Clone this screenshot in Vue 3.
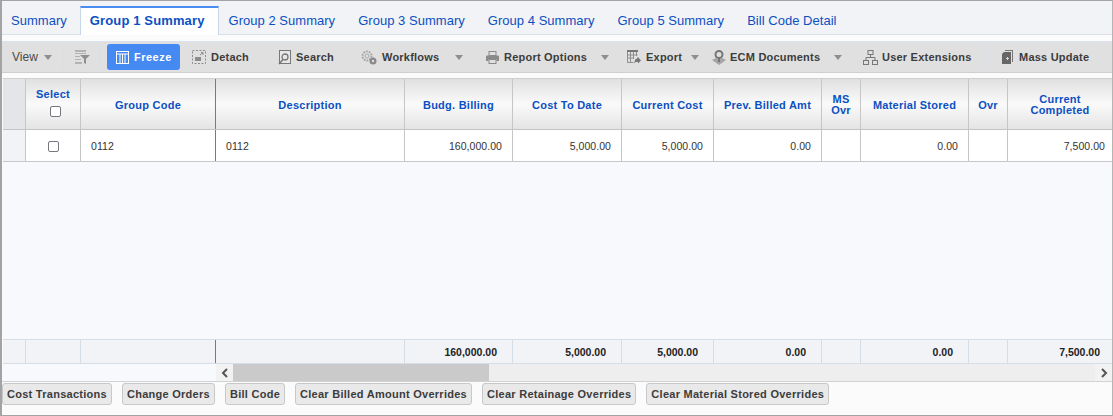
<script setup>
const tabs = ["Summary", "Group 1 Summary", "Group 2 Summary", "Group 3 Summary", "Group 4 Summary", "Group 5 Summary", "Bill Code Detail"];

const columns = [
  { key: "rowHead" },
  { key: "select", label: "Select" },
  { key: "code", label: "Group Code" },
  { key: "desc", label: "Description" },
  { key: "budg", label: "Budg. Billing", value: "160,000.00" },
  { key: "cost", label: "Cost To Date", value: "5,000.00" },
  { key: "current", label: "Current Cost", value: "5,000.00" },
  { key: "prev", label: "Prev. Billed Amt", value: "0.00" },
  { key: "msOvr", label: "MS Ovr", narrow: true },
  { key: "material", label: "Material Stored", value: "0.00" },
  { key: "ovr", label: "Ovr" },
  { key: "completed", label: "Current Completed", narrow: true, value: "7,500.00" },
];

const actions = ["Cost Transactions", "Change Orders", "Bill Code", "Clear Billed Amount Overrides", "Clear Retainage Overrides", "Clear Material Stored Overrides"];
</script>

<template>
  <div class="page">
    <nav class="tabs">
      <a v-for="(tab, i) in tabs" :key="tab" class="tab" :class="{ 'tab--active': i === 1 }">{{ tab }}</a>
    </nav>

    <div class="toolbar">
      <span class="tool tool--view">View<i class="caret"></i></span>
      <span class="sep"></span>
      <span class="tool tool--filter">
        <svg width="15" height="14" viewBox="0 0 15 14" fill="none">
          <path d="M0 0h11v2H0zM0 3h11v1H0zM0 6h5v1H0zM0 9h6v1H0zM0 12h7v2H0z" fill="#b2b2b2" />
          <path d="M5 5h10l-4 4v5l-2-1V9z" fill="#8f8f8f" />
        </svg>
      </span>
      <span class="sep"></span>
      <span class="tool tool--freeze">
        <svg width="13" height="13" viewBox="0 0 13 13" fill="none" stroke="#fff">
          <rect x=".5" y=".5" width="12" height="12" />
          <path d="M.5 3h12M4 3v9.500M6.500 3v9.500M9 3v9.500" />
        </svg>
        Freeze
      </span>
      <span class="tool tool--detach">
        <svg width="14" height="14" viewBox="0 0 14 14" fill="none">
          <rect x=".5" y=".5" width="13" height="13" stroke="#8c8c8c" stroke-dasharray="2 1.500" />
          <rect x="3" y="7" width="6" height="4" fill="#8c8c8c" />
          <path d="M8 5l3-2.500M9 2.500h2V5" stroke="#8c8c8c" />
        </svg>
        Detach
      </span>
      <span class="sep"></span>
      <span class="tool tool--search">
        <svg width="13" height="15" viewBox="0 0 13 15" fill="none" stroke="#777">
          <rect x="1.500" y=".5" width="11" height="13" fill="#e8e8e8" />
          <circle cx="7" cy="7" r="3" stroke-width="1.300" />
          <path d="M5 9.500L1 14" stroke-width="1.600" />
        </svg>
        Search
      </span>
      <span class="tool tool--workflows">
        <svg width="16" height="15" viewBox="0 0 16 15" fill="none">
          <circle cx="6" cy="6" r="4.500" stroke="#a8a8a8" stroke-width="2" stroke-dasharray="1.800 1" />
          <circle cx="6" cy="6" r="2" stroke="#a8a8a8" />
          <circle cx="12" cy="11" r="3.500" fill="#8a8a8a" />
          <circle cx="12" cy="11" r="1.200" fill="#e0e0e0" />
        </svg>
        Workflows<i class="caret"></i>
      </span>
      <span class="tool tool--report">
        <svg width="13" height="13" viewBox="0 0 13 13" fill="none">
          <rect x="3" y=".5" width="7" height="4" stroke="#8a8a8a" />
          <path d="M1 4.500h11a1 1 0 0 1 1 1V10h-2.500V8h-8v2H0V5.500a1 1 0 0 1 1-1z" fill="#8a8a8a" />
          <rect x="3" y="8.500" width="7" height="4" stroke="#8a8a8a" />
        </svg>
        Report Options<i class="caret"></i>
      </span>
      <span class="tool tool--export">
        <svg width="14" height="14" viewBox="0 0 14 14" fill="none">
          <path d="M0 0h11v2H0z" fill="#777" />
          <path d="M.5 2v10.500h6M3.500 2v10M6.500 2v7M9.500 2v4M.5 5h10M.5 8h6" stroke="#8f8f8f" />
          <path d="M7 13l1.500-4h1L11 7l3 3.500-3 3V12H9z" fill="#777" />
        </svg>
        Export<i class="caret"></i>
      </span>
      <span class="tool tool--ecm">
        <svg width="14" height="15" viewBox="0 0 14 15" fill="none">
          <path d="M0 10l4-2 3 2 3-2 4 2-7 5z" fill="#a5a5a5" />
          <circle cx="7" cy="4.500" r="3.500" stroke="#777" stroke-width="2" />
          <path d="M6 8h2v4H6z" fill="#777" />
        </svg>
        ECM Documents<i class="caret"></i>
      </span>
      <span class="tool tool--ext">
        <svg width="15" height="15" viewBox="0 0 15 15" fill="none" stroke="#777">
          <rect x="5" y=".5" width="5" height="4" />
          <rect x=".5" y="10.500" width="5" height="4" />
          <rect x="9.500" y="10.500" width="5" height="4" />
          <path d="M7.500 4.500v3M3 10.500v-3h9v3" />
        </svg>
        User Extensions
      </span>
      <span class="sep"></span>
      <span class="tool tool--mass">
        <svg width="11" height="14" viewBox="0 0 11 14">
          <path d="M3 0h8v12h-1V1H3z" fill="#777" />
          <path d="M2 2h7v12H0V4z" fill="#666" />
          <path d="M4 8h1V7h1v1h1v1H6v1H5V9H4z" fill="#d8d8d8" />
        </svg>
        Mass Update
      </span>
    </div>

    <div class="grid-wrap">
      <div class="grid grid--head">
        <div v-for="col in columns" :key="col.key" class="hcell" :class="`c-${col.key}`">
          <span v-if="col.label" :class="{ 'hcell__narrow': col.narrow }">{{ col.label }}</span>
          <input v-if="col.key === 'select'" class="check check--head" type="checkbox" />
        </div>
      </div>

      <div class="grid grid--row">
        <div v-for="col in columns" :key="col.key" class="cell" :class="`c-${col.key}`">
          <input v-if="col.key === 'select'" class="check" type="checkbox" />
          <template v-else-if="col.key === 'code' || col.key === 'desc'">0112</template>
          <template v-else>{{ col.value }}</template>
        </div>
      </div>

      <div class="grid-empty"></div>

      <div class="grid grid--foot">
        <div v-for="col in columns" :key="col.key" class="fcell" :class="`c-${col.key}`">{{ col.value }}</div>
      </div>
    </div>

    <div class="scrollrow">
      <div class="scrollrow__blank"></div>
      <div class="scrollbar">
        <span class="scrollbar__arrow">
          <svg width="8" height="10" viewBox="0 0 8 10" fill="none" stroke="#555" stroke-width="2"><path d="M6 1L2 5l4 4" /></svg>
        </span>
        <span class="scrollbar__thumb"></span>
        <span class="scrollbar__arrow scrollbar__arrow--end">
          <svg width="8" height="10" viewBox="0 0 8 10" fill="none" stroke="#555" stroke-width="2"><path d="M2 1l4 4-4 4" /></svg>
        </span>
      </div>
    </div>

    <div class="actions">
      <button v-for="a in actions" :key="a" class="action" type="button">{{ a }}</button>
    </div>
  </div>
</template>

<style>
html,
body {
  margin: 0;
  background: #fff;
}
</style>

<style scoped>
.page {
  box-sizing: border-box;
  width: 1113px;
  height: 416px;
  display: flex;
  flex-direction: column;
  border: 1px solid #a3a3a3;
  border-left-width: 2px;
  border-right-color: #b5b5b5;
  background: #fbfbfb;
  font-family: "Liberation Sans", Arial, sans-serif;
  overflow: hidden;
}

.tabs {
  height: 34px;
  padding-top: 5px;
  box-sizing: border-box;
  display: flex;
  background: #f1f3f6;
  border-bottom: 1px solid #dcdfe3;
  flex-shrink: 0;
}

.tab {
  height: 29px;
  box-sizing: border-box;
  padding: 7px 13px 0 10px;
  font-size: 13px;
  letter-spacing: 0.03px;
  color: #0b50c2;
  white-space: nowrap;
}

.tab:first-child {
  padding: 7px 13px 0 9px;
}

.tab--active {
  background: #fff;
  border-top: 2px solid #4a8cf0;
  border-left: 1px solid #c8d6e8;
  border-right: 1px solid #c8d6e8;
  padding: 5px 13px 0 9px;
  font-weight: bold;
  letter-spacing: 0.13px;
}

.toolbar {
  margin-top: 6px;
  height: 32px;
  box-sizing: border-box;
  display: flex;
  align-items: center;
  background: #e0e0e0;
  border-top: 1px solid #d9e2ee;
  border-bottom: 1px solid #cfcfcf;
  font-size: 11px;
  font-weight: bold;
  letter-spacing: 0.22px;
  color: #3c3c3c;
  flex-shrink: 0;
}

.tool {
  display: flex;
  align-items: center;
  box-sizing: border-box;
  white-space: nowrap;
}

.tool svg {
  flex-shrink: 0;
}

.sep {
  width: 1px;
  height: 26px;
  background: #d8dfe7;
}

.caret {
  display: inline-block;
  width: 0;
  height: 0;
  border-left: 4px solid transparent;
  border-right: 4px solid transparent;
  border-top: 5px solid #8e8e8e;
}

.tool--view {
  width: 61px;
  padding-left: 10px;
  font-weight: normal;
  font-size: 12px;
  letter-spacing: 0;
  color: #4a4a4a;
}

.tool--view .caret {
  margin-left: 6px;
}

.tool--filter {
  width: 36px;
  padding-left: 11px;
}

.tool--freeze {
  margin-left: 6px;
  width: 73px;
  height: 26px;
  padding-left: 9px;
  gap: 5px;
  border-radius: 3px;
  background: #448af2;
  color: #fff;
  letter-spacing: 0.5px;
}

.tool--detach {
  width: 81px;
  padding-left: 12px;
  gap: 5px;
}

.tool--search {
  width: 99px;
  padding-left: 16px;
  gap: 5px;
}

.tool--workflows {
  width: 125px;
  gap: 5px;
}

.tool--workflows .caret {
  margin-left: 11px;
}

.tool--report {
  width: 141px;
  gap: 5px;
}

.tool--report .caret {
  margin-left: 9px;
}

.tool--export {
  width: 85px;
  gap: 5px;
}

.tool--export .caret {
  margin-left: 4px;
}

.tool--ecm {
  width: 151px;
  gap: 4px;
}

.tool--ecm .caret {
  margin-left: 10px;
}

.tool--ext {
  width: 123px;
  gap: 4px;
}

.tool--mass {
  padding-left: 15px;
  gap: 6px;
}

.grid-wrap {
  margin: 5px 0 0 1px;
  flex: 1;
  min-height: 0;
  display: flex;
  flex-direction: column;
  border-top: 1px solid #cfcfcf;
}

.grid {
  display: grid;
  box-sizing: border-box;
  flex-shrink: 0;
  grid-template-columns: 23px 55px 135px 189px 108px 109px 92px 108px 39px 108px 39px 104px;
}

.grid--head {
  height: 51px;
  border-bottom: 1px solid #c4c4c4;
  background: linear-gradient(#e0e0e0 0%, #fafafa 50%, #e4e4e4 100%);
}

.hcell {
  display: flex;
  flex-direction: column;
  align-items: center;
  justify-content: center;
  box-sizing: border-box;
  padding-top: 2px;
  text-align: center;
  border-right: 1px solid #c6c6c6;
  font-size: 11px;
  font-weight: bold;
  line-height: 11px;
  letter-spacing: 0.25px;
  color: #0b50c2;
}

.hcell.c-rowHead {
  background: #e3e5e8;
}

.hcell__narrow {
  display: block;
  width: 80px;
}

.c-msOvr .hcell__narrow {
  width: 30px;
}

.hcell.c-select {
  padding: 0 0 3px;
}

.hcell.c-code,
.cell.c-code,
.fcell.c-code {
  border-right-color: #4a80dc;
}

.hcell.c-completed,
.cell.c-completed,
.fcell.c-completed {
  border-right: none;
}

.check {
  appearance: none;
  display: block;
  box-sizing: border-box;
  width: 11px;
  height: 11px;
  margin: 0;
  background: #fff;
  border: 1px solid #77777f;
  border-radius: 2px;
}

.check--head {
  margin: 6px 0 0 4px;
}

.grid--row {
  height: 32px;
  background: #fff;
  border-bottom: 1px solid #c8c8c8;
}

.cell {
  display: flex;
  align-items: center;
  justify-content: flex-end;
  box-sizing: border-box;
  padding: 1px 10px 0 0;
  border-right: 1px solid #c6c6c6;
  font-size: 10.5px;
  letter-spacing: 0.05px;
  color: #333;
}

.cell.c-rowHead {
  background: #f1f3f7;
}

.cell.c-select {
  justify-content: center;
  padding: 1px 0 0;
}

.cell.c-code,
.cell.c-desc {
  justify-content: flex-start;
  padding-left: 10px;
}

.cell.c-completed {
  padding-right: 7px;
}

.grid-empty {
  flex: 1;
  background: #f7f9fd;
  border-bottom: 1px solid #d5dde6;
}

.grid--foot {
  height: 24px;
  background: #f1f3f7;
  border-bottom: 1px solid #d5dde6;
}

.fcell {
  display: flex;
  align-items: center;
  justify-content: flex-end;
  box-sizing: border-box;
  padding: 1px 15px 0 0;
  border-right: 1px solid #d5dde6;
  font-size: 10.5px;
  font-weight: bold;
  color: #222;
}

.fcell.c-code {
  border-right-color: #4a80dc;
}

.fcell.c-completed {
  padding-right: 12px;
}

.scrollrow {
  display: flex;
  height: 18px;
  background: #f7f9fd;
  border-bottom: 1px solid #d0d3d6;
  box-sizing: border-box;
  flex-shrink: 0;
}

.scrollrow__blank {
  width: 214px;
}

.scrollbar {
  flex: 1;
  display: flex;
  align-items: stretch;
  background: #eeeeee;
}

.scrollbar__arrow {
  width: 17px;
  display: flex;
  align-items: center;
  justify-content: center;
  background: #f2f2f2;
}

.scrollbar__thumb {
  width: 256px;
  background: #cacaca;
}

.scrollbar__arrow--end {
  margin-left: auto;
}

.actions {
  display: flex;
  gap: 10px;
  padding: 1px 0 0 0;
  height: 33px;
  box-sizing: border-box;
  flex-shrink: 0;
}

.action {
  height: 22px;
  padding: 0 4px;
  border: 1px solid #c6c8ca;
  border-radius: 3px;
  background: #e9e9e9;
  font-family: inherit;
  font-size: 11px;
  font-weight: bold;
  letter-spacing: 0.27px;
  color: #3c3c3c;
  white-space: nowrap;
}
</style>
